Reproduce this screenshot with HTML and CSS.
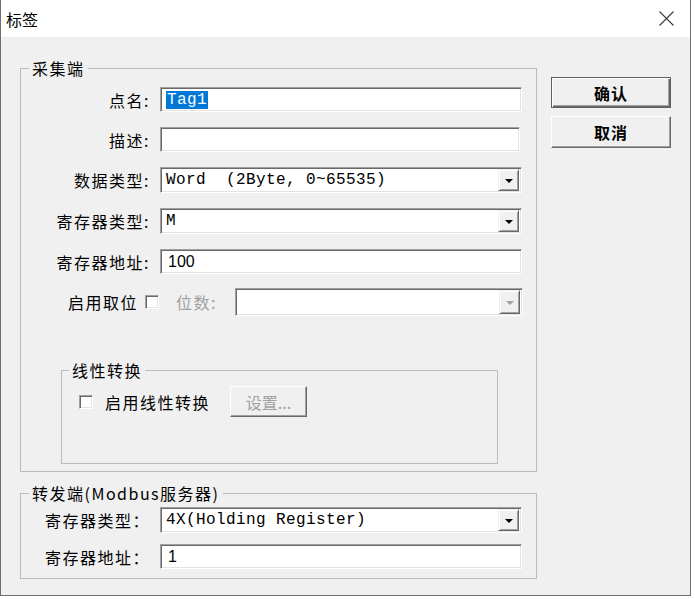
FILE: index.html
```html
<!DOCTYPE html>
<html lang="zh-CN">
<head>
<meta charset="utf-8">
<title>标签</title>
<link rel="stylesheet" href="styles.css">
</head>
<body>
<div class="window">
  <div class="titlebar">
    <span class="title">标签</span>
    <svg class="close" width="15" height="15" viewBox="0 0 15 15"><path d="M0.5 0.5L14.5 14.5M14.5 0.5L0.5 14.5" stroke="#3a3a3a" stroke-width="1.1" fill="none"/></svg>
  </div>
  <div class="client">
    <div class="groups">
      <fieldset class="group g-collect">
        <legend>采集端</legend>
        <div class="form">
          <span class="lbl">点名:</span>
          <div class="edit"><span class="sel mono">Tag1</span></div>
          <span class="lbl">描述:</span>
          <div class="edit narrow"></div>
          <span class="lbl">数据类型:</span>
          <div class="combo"><span class="val mono">Word  (2Byte, 0~65535)</span><span class="drop"><i class="tri"></i></span></div>
          <span class="lbl">寄存器类型:</span>
          <div class="combo"><span class="val mono">M</span><span class="drop"><i class="tri"></i></span></div>
          <span class="lbl">寄存器地址:</span>
          <div class="edit"><span class="val sans">100</span></div>
        </div>
        <div class="bitrow">
          <span class="lbl">启用取位</span>
          <span class="check"></span>
          <span class="lbl dim">位数:</span>
          <div class="combo bits"><span class="val"></span><span class="drop"><i class="tri dimtri"></i></span></div>
        </div>
        <fieldset class="group g-linear">
          <legend>线性转换</legend>
          <div class="linrow">
            <span class="check"></span>
            <span class="lbl">启用线性转换</span>
            <span class="btn flat dim">设置...</span>
          </div>
        </fieldset>
      </fieldset>
      <fieldset class="group g-forward">
        <legend>转发端(Modbus服务器)</legend>
        <div class="form tight">
          <span class="lbl">寄存器类型：</span>
          <div class="combo"><span class="val mono">4X(Holding Register)</span><span class="drop"><i class="tri"></i></span></div>
          <span class="lbl">寄存器地址：</span>
          <div class="edit"><span class="val sans">1</span></div>
        </div>
      </fieldset>
    </div>
    <div class="buttons">
      <span class="btn default">确认</span>
      <span class="btn">取消</span>
    </div>
  </div>
</div>
</body>
</html>
```
FILE: styles.css
```css
* { box-sizing: border-box; }
html, body { margin: 0; padding: 0; background: #fff; }
body {
  font-family: "Noto Sans CJK SC", "Noto Sans", sans-serif;
  font-size: 16px;
  color: #000;
}
.window {
  width: 691px;
  height: 596px;
  border: 1px solid #6e6e6e;
  border-top: none;
  display: flex;
  flex-direction: column;
}
.titlebar {
  height: 37px;
  background: #fff;
  display: flex;
  align-items: center;
  padding-left: 5px;
}
.title { font-size: 16px; line-height: 20px; }
.close { margin-left: auto; margin-right: 16px; }
.client {
  flex: 1;
  background: #f0f0f0;
  display: flex;
  align-items: flex-start;
  padding: 22px 0 0 19px;
}
.groups { width: 517px; display: flex; flex-direction: column; }
.group {
  margin: 0;
  padding: 0;
  border: 1px solid #bcbcbc;
  min-width: 0;
}
.group legend {
  padding: 0 3px;
  margin-left: 8px;
  line-height: 18px;
  font-size: 16px;
  letter-spacing: 1.5px;
}
.group.g-collect { padding: 10px 0 7px 0; }
.form {
  display: grid;
  grid-template-columns: 129px 362px;
  column-gap: 10px;
  row-gap: 15px;
  align-items: center;
}
.form.tight { row-gap: 11px; }
.lbl {
  text-align: right;
  white-space: nowrap;
  letter-spacing: 1.5px;
  line-height: 20px;
}
.dim { color: #a0a0a0; }
.edit, .combo {
  background: #fff;
  border: 1px solid;
  border-color: #a0a0a0 #fff #fff #a0a0a0;
  box-shadow: inset 1px 1px 0 #696969, inset -1px -1px 0 #e3e3e3;
  display: flex;
  align-items: center;
}
.edit { height: 25px; padding-left: 5px; }
.edit.narrow { width: 360px; }
.combo { height: 26px; padding: 1px; }
.combo .val { flex: 1; padding-left: 4px; white-space: pre; }
.mono { font-family: "Liberation Mono", monospace; font-size: 16px; line-height: 18px; white-space: pre; letter-spacing: 0.4px; }
.sans { font-family: "Liberation Sans", sans-serif; font-size: 16px; line-height: 18px; }
.edit .val.sans { padding-left: 2px; }
.sel { background: #0078d7; color: #fff; padding: 0 1px; line-height: 18px; }
.drop {
  width: 21px;
  height: 22px;
  margin-right: 1px;
  background: #f0f0f0;
  border: 1px solid;
  border-color: #f0f0f0 #696969 #696969 #f0f0f0;
  box-shadow: inset 1px 1px 0 #fff, inset -1px -1px 0 #a0a0a0;
  display: flex;
  align-items: center;
  justify-content: center;
  flex: none;
}
.tri {
  width: 0; height: 0;
  border-left: 4px solid transparent;
  border-right: 4px solid transparent;
  border-top: 4px solid #000;
  margin-top: 1px;
}
.tri.dimtri { border-top-color: #a0a0a0; }
.bitrow {
  display: flex;
  align-items: center;
  margin: 14px 13px 0 47px;
  height: 28px;
}
.check {
  width: 14px; height: 14px;
  background: #fff;
  border: 1px solid;
  border-color: #a0a0a0 #fff #fff #a0a0a0;
  box-shadow: inset 1px 1px 0 #696969, inset -1px -1px 0 #e3e3e3;
  flex: none;
}
.bitrow .check { margin-left: 7px; }
.bitrow .dim { margin-left: 17px; }
.combo.bits { width: 288px; height: 28px; margin-left: auto; flex: none; }
.combo.bits .drop { height: 24px; }
.group.g-linear {
  margin: 45px 0 0 40px;
  width: 437px;
  height: 103px;
  padding: 7px 0 0 0;
}
.group.g-linear legend { margin-left: 7px; }
.linrow { display: flex; align-items: center; padding-left: 17px; height: 31px; }
.linrow .lbl { margin-left: 12px; }
.btn {
  display: flex;
  align-items: center;
  justify-content: center;
  height: 31px;
  background: #f0f0f0;
  border: 1px solid;
  border-color: #fff #696969 #696969 #fff;
  box-shadow: inset -1px -1px 0 #a0a0a0;
  letter-spacing: 1px;
  white-space: nowrap;
}
.btn.flat { width: 77px; margin-left: 20px; letter-spacing: 0; }
.group.g-forward { margin-top: 12px; padding: 5px 0 9px 0; }
.buttons {
  display: flex;
  flex-direction: column;
  gap: 8px;
  width: 120px;
  margin: 18px 0 0 14px;
}
.buttons .btn { font-weight: 700; height: 31px; }
.buttons .btn + .btn { height: 32px; }
.btn.default {
  border: 1px solid #5f5f5f;
  box-shadow: inset 1px 1px 0 #fff, inset -1px -1px 0 #696969, inset -2px -2px 0 #a0a0a0;
}
```
